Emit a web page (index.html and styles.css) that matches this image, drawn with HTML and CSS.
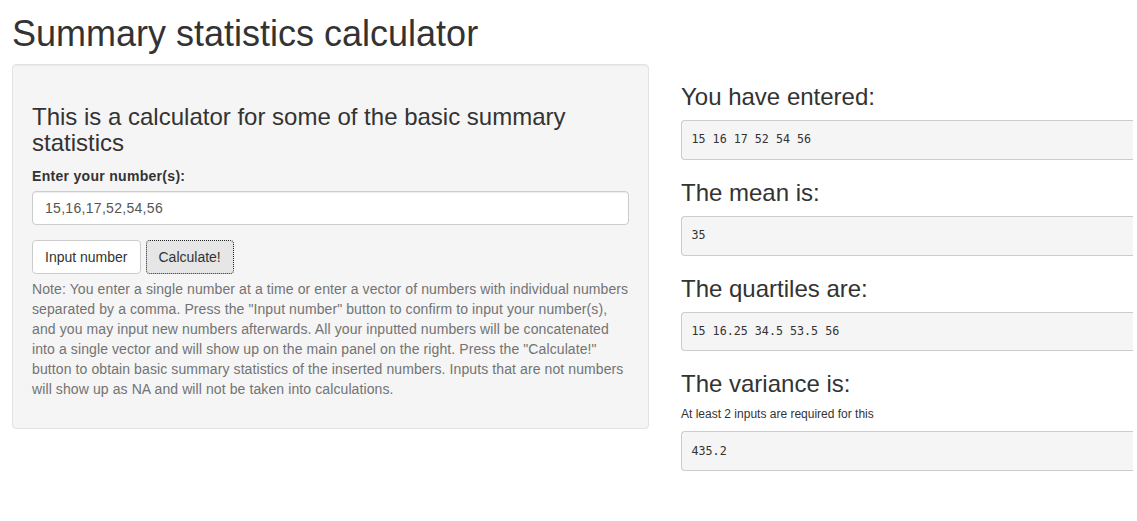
FILE: index.html
```html
<!DOCTYPE html>
<html lang="en">
<head>
<meta charset="utf-8">
<title>Summary statistics calculator</title>
<link rel="stylesheet" href="styles.css">
</head>
<body>
<div class="container">
  <h1 class="title">Summary statistics calculator</h1>
  <div class="row">
    <div class="sidebar">
      <div class="well">
        <h3 class="heading">This is a calculator for some of the basic summary statistics</h3>
        <div class="form-group">
          <label class="label" for="nums">Enter your number(s):</label>
          <input id="nums" class="form-control" type="text" value="15,16,17,52,54,56">
        </div>
        <div class="buttons">
          <button class="btn" type="button">Input number</button>
          <button class="btn btn-focus" type="button">Calculate!</button>
        </div>
        <p class="help-block">Note: You enter a single number at a time or enter a vector of numbers with individual numbers separated by a comma. Press the "Input number" button to confirm to input your number(s), and you may input new numbers afterwards. All your inputted numbers will be concatenated into a single vector and will show up on the main panel on the right. Press the "Calculate!" button to obtain basic summary statistics of the inserted numbers. Inputs that are not numbers will show up as NA and will not be taken into calculations.</p>
      </div>
    </div>
    <div class="main">
      <h3 class="heading">You have entered:</h3>
      <pre class="output">15 16 17 52 54 56</pre>
      <h3 class="heading">The mean is:</h3>
      <pre class="output">35</pre>
      <h3 class="heading">The quartiles are:</h3>
      <pre class="output">15 16.25 34.5 53.5 56</pre>
      <h3 class="heading">The variance is:</h3>
      <h6 class="note">At least 2 inputs are required for this</h6>
      <pre class="output">435.2</pre>
    </div>
  </div>
</div>
</body>
</html>
```

FILE: styles.css
```css
* { box-sizing: border-box; }

html, body {
  margin: 0;
  padding: 0;
  background: #fff;
}

body {
  font-family: "Liberation Sans", Arial, Helvetica, sans-serif;
  font-size: 14px;
  line-height: 1.42857143;
  color: #333;
}

.container {
  padding: 0 4px 0 12px;
}

.title {
  font-size: 36px;
  font-weight: normal;
  line-height: 1.1;
  margin: 14px 0 10px;
  color: #333;
}

.row {
  display: flex;
  gap: 32px;
  align-items: flex-start;
}

.sidebar {
  flex: 0 0 637px;
  width: 637px;
}

.main {
  flex: 1 1 auto;
  min-width: 0;
}

.well {
  background: #f5f5f5;
  border: 1px solid #e3e3e3;
  border-radius: 4px;
  box-shadow: inset 0 1px 1px rgba(0, 0, 0, 0.05);
  padding: 19px;
  min-height: 20px;
}

.heading {
  font-size: 24px;
  font-weight: normal;
  line-height: 1.1;
  margin: 20px 0 10px;
  color: #333;
}

.form-group {
  margin-bottom: 15px;
}

.label {
  display: inline-block;
  font-weight: bold;
  margin-bottom: 5px;
  max-width: 100%;
  letter-spacing: 0.3px;
}

.form-control {
  display: block;
  width: 100%;
  height: 34px;
  padding: 6px 12px;
  font-family: inherit;
  font-size: 14px;
  line-height: 1.42857143;
  letter-spacing: 0.3px;
  color: #555;
  background: #fff;
  border: 1px solid #ccc;
  border-radius: 4px;
  box-shadow: inset 0 1px 1px rgba(0, 0, 0, 0.075);
}

.buttons {
  display: flex;
  gap: 5px;
}

.btn {
  display: inline-block;
  height: 34px;
  padding: 6px 12px;
  font-family: inherit;
  font-size: 14px;
  line-height: 1.42857143;
  color: #333;
  background: #fff;
  border: 1px solid #ccc;
  border-radius: 4px;
  cursor: pointer;
}

.btn-focus {
  background: #e6e6e6;
  border: 1px dotted #222;
}

.help-block {
  display: block;
  margin: 5px 0 10px;
  color: #737373;
  letter-spacing: 0.1px;
}

.output {
  display: block;
  margin: 0 0 10px;
  padding: 9.5px;
  font-family: "DejaVu Sans Mono", "Liberation Mono", monospace;
  font-size: 11.7px;
  line-height: 18.57px;
  color: #333;
  background: #f5f5f5;
  border: 1px solid #ccc;
  border-right: none;
  border-radius: 4px 0 0 4px;
  white-space: pre-wrap;
  word-break: break-all;
}

.note {
  font-size: 12px;
  font-weight: normal;
  line-height: 1.1;
  margin: 10px 0;
  color: #333;
}
```
